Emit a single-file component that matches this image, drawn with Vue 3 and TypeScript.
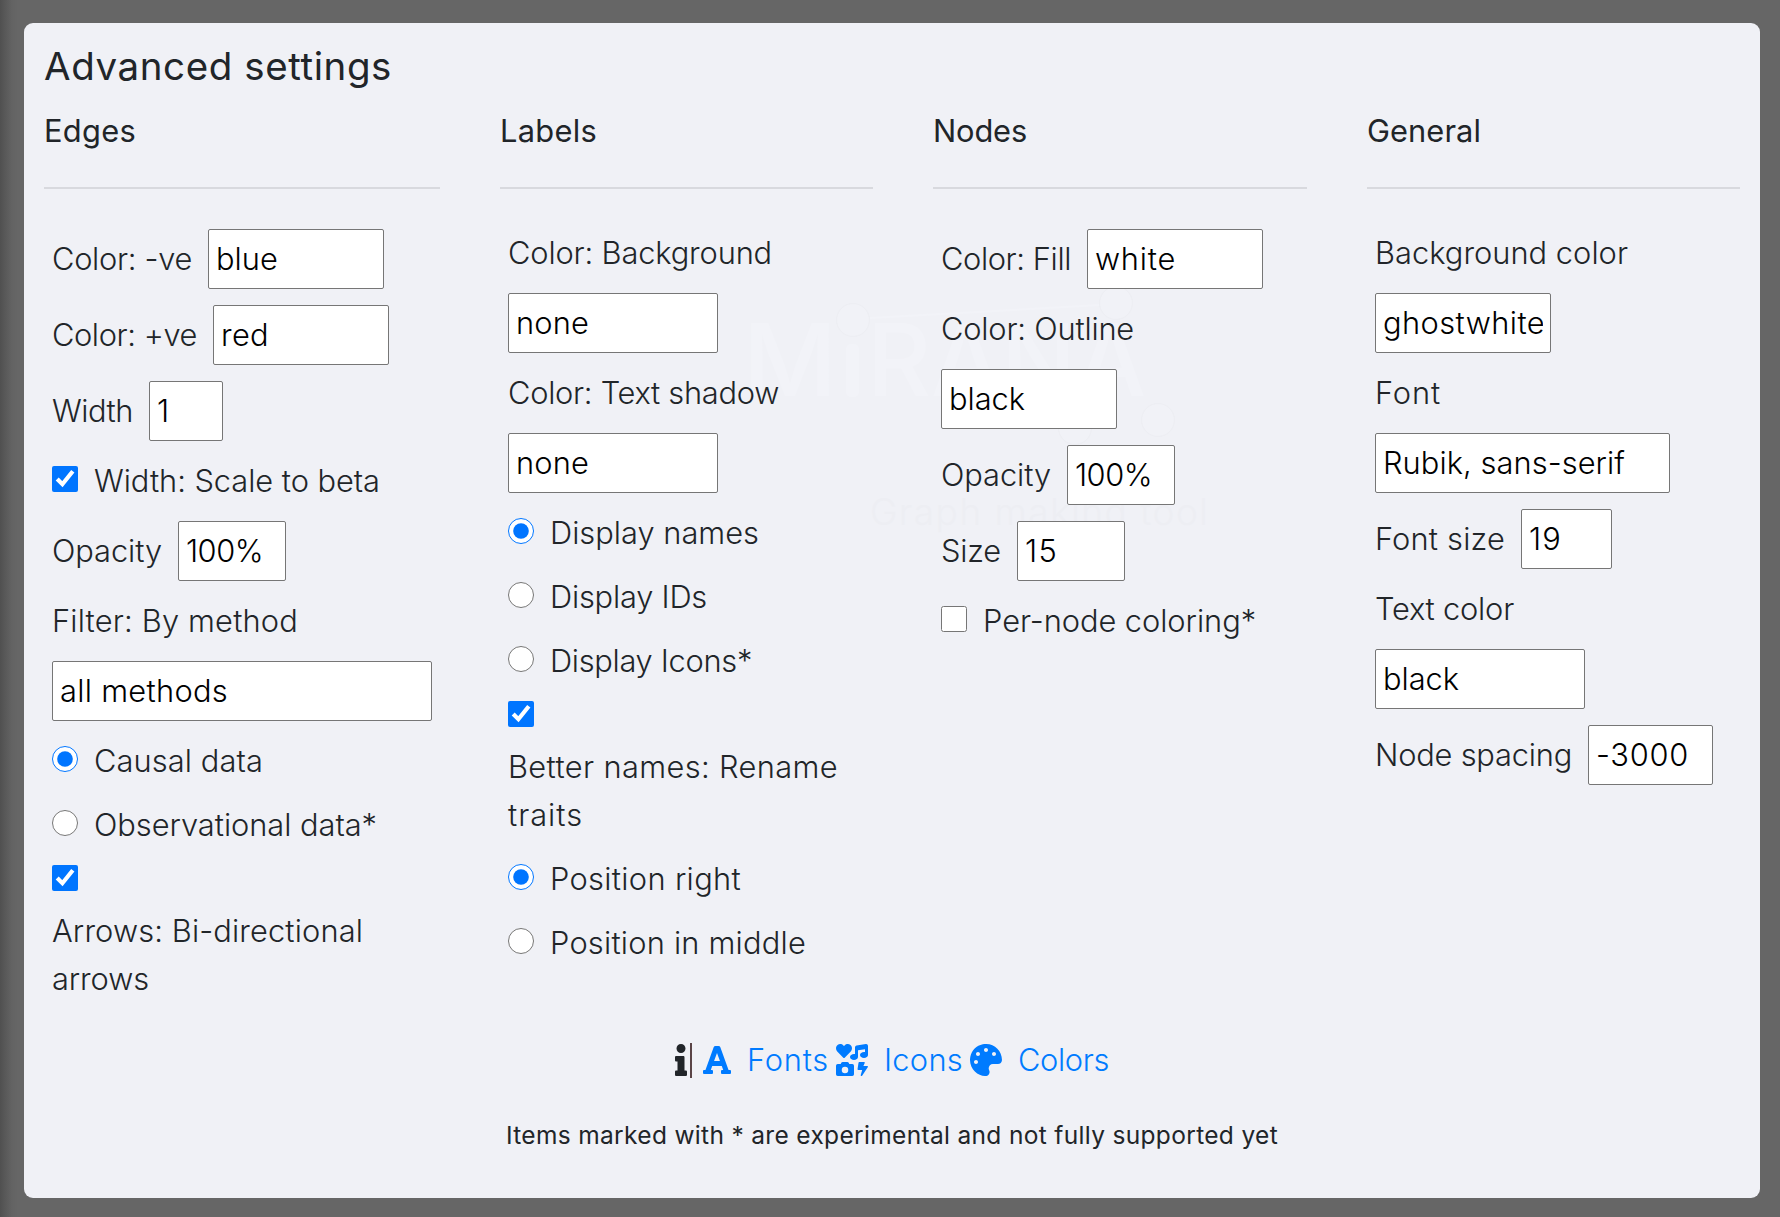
<script setup lang="ts">
type Kind = 'label' | 'field' | 'checkbox' | 'radio' | 'lone'

interface Row {
  kind: Kind
  lines?: [string, number][]
  value?: string
  valueWidth?: number
  boxWidth?: number
  checked?: boolean
}

interface Column {
  title: string
  titleWidth: number
  rows: Row[]
}

const FAMILY = 'Inter, Roboto, "Liberation Sans", sans-serif'
const ctx = document.createElement('canvas').getContext('2d')

function track(text: string, width: number, size = 30.8, weight = 300) {
  if (!ctx) return {}
  ctx.font = `${weight} ${size}px ${FAMILY}`
  const gap = (width - ctx.measureText(text).width) / text.length
  return { letterSpacing: `${gap.toFixed(3)}px` }
}

const label = (text: string, w: number): Row => ({ kind: 'label', lines: [[text, w]] })
const field = (value: string, valueWidth: number, boxWidth: number, text?: string, w = 0): Row => ({
  kind: 'field',
  lines: text ? [[text, w]] : [],
  value,
  valueWidth,
  boxWidth,
})
const choice = (kind: Kind, text: string, w: number, checked = false): Row => ({
  kind,
  lines: [[text, w]],
  checked,
})

const columns: Column[] = [
  {
    title: 'Edges',
    titleWidth: 92,
    rows: [
      field('blue', 62, 176, 'Color: -ve', 140),
      field('red', 48, 176, 'Color: +ve', 145),
      field('1', 17, 74, 'Width', 81),
      choice('checkbox', 'Width: Scale to beta', 286, true),
      field('100%', 77, 108, 'Opacity', 110),
      label('Filter: By method', 246),
      field('all methods', 168, 380),
      choice('radio', 'Causal data', 169, true),
      choice('radio', 'Observational data*', 283),
      { kind: 'lone', checked: true },
      { kind: 'label', lines: [['Arrows: Bi-directional', 311], ['arrows', 97]] },
    ],
  },
  {
    title: 'Labels',
    titleWidth: 97,
    rows: [
      label('Color: Background', 264),
      field('none', 73, 210),
      label('Color: Text shadow', 271),
      field('none', 73, 210),
      choice('radio', 'Display names', 209, true),
      choice('radio', 'Display IDs', 157),
      choice('radio', 'Display Icons*', 202),
      { kind: 'lone', checked: true },
      { kind: 'label', lines: [['Better names: Rename', 330], ['traits', 75]] },
      choice('radio', 'Position right', 191, true),
      choice('radio', 'Position in middle', 256),
    ],
  },
  {
    title: 'Nodes',
    titleWidth: 94,
    rows: [
      field('white', 81, 176, 'Color: Fill', 130),
      label('Color: Outline', 193),
      field('black', 76, 176),
      field('100%', 77, 108, 'Opacity', 110),
      field('15', 33, 108, 'Size', 60),
      choice('checkbox', 'Per-node coloring*', 273),
    ],
  },
  {
    title: 'General',
    titleWidth: 114,
    rows: [
      label('Background color', 253),
      field('ghostwhite', 162, 176),
      label('Font', 66),
      field('Rubik, sans-serif', 242, 295),
      field('19', 33, 91, 'Font size', 130),
      label('Text color', 139),
      field('black', 76, 210),
      field('-3000', 93, 125, 'Node spacing', 197),
    ],
  },
]
</script>

<template>
  <div class="backdrop">
    <main class="panel">
      <svg class="watermark" viewBox="0 0 490 260" width="490" height="260" aria-hidden="true">
        <g fill="#f2f3f8">
          <text x="23" y="116" font-size="100" font-weight="500" textLength="94" lengthAdjust="spacingAndGlyphs">M</text>
          <rect x="126" y="64" width="13" height="53" rx="5" />
          <text x="147" y="116" font-size="100" font-weight="500" textLength="279" lengthAdjust="spacingAndGlyphs">RANA</text>
        </g>
        <path d="M150 38 L380 25" stroke="#f2f3f8" stroke-width="2" />
        <g fill="#f1f2f7" stroke="#edeef3">
          <circle cx="133" cy="40" r="16.5" />
          <circle cx="396" cy="23" r="16.5" />
          <circle cx="355" cy="148" r="16.5" />
          <circle cx="438" cy="140" r="16.5" />
        </g>
        <text x="150" y="245" font-size="37" fill="#edeef3" textLength="338">Graph making tool</text>
      </svg>

      <h1 :style="track('Advanced settings', 348, 38.5, 400)">Advanced settings</h1>

      <div class="columns">
        <section v-for="col in columns" :key="col.title" class="column">
          <h2 :style="track(col.title, col.titleWidth, 30.8, 400)">{{ col.title }}</h2>
          <hr />
          <div class="rows">
            <div v-for="(row, i) in col.rows" :key="i" class="row" :class="row.kind">
              <input
                v-if="row.kind === 'checkbox' || row.kind === 'lone'"
                class="tick"
                type="checkbox"
                :checked="row.checked"
              />
              <input
                v-if="row.kind === 'radio'"
                class="tick"
                type="radio"
                :checked="row.checked"
              />
              <label v-if="row.lines && row.lines.length">
                <span v-for="[text, w] in row.lines" :key="text" :style="track(text, w)">{{ text }}</span>
              </label>
              <input
                v-if="row.kind === 'field'"
                class="entry"
                type="text"
                :value="row.value"
                :style="{ width: row.boxWidth + 'px', ...track(row.value!, row.valueWidth!) }"
              />
            </div>
          </div>
        </section>
      </div>

      <nav class="links">
        <svg class="info" viewBox="0 0 192 512" width="12" height="32">
          <path d="M20 424.229h20V279.771H20c-11.046 0-20-8.954-20-20V212c0-11.046 8.954-20 20-20h112c11.046 0 20 8.954 20 20v212.229h20c11.046 0 20 8.954 20 20V492c0 11.046-8.954 20-20 20H20c-11.046 0-20-8.954-20-20v-47.771c0-11.046 8.954-20 20-20zM96 0C56.235 0 24 32.235 24 72s32.235 72 72 72 72-32.235 72-72S135.764 0 96 0z" />
        </svg>
        <i class="bar"></i>
        <a class="fonts">
          <svg viewBox="0 0 448 512" width="28" height="32">
            <path d="M432 416h-23.41L277.53 53.69A32 32 0 0 0 247.58 32h-47.16a32 32 0 0 0-29.95 21.69L39.41 416H16a16 16 0 0 0-16 16v32a16 16 0 0 0 16 16h128a16 16 0 0 0 16-16v-32a16 16 0 0 0-16-16h-19.58l23.3-64h152.56l23.3 64H304a16 16 0 0 0-16 16v32a16 16 0 0 0 16 16h128a16 16 0 0 0 16-16v-32a16 16 0 0 0-16-16zM176.85 272L224 142.51 271.15 272z" />
          </svg>
          <span :style="track('Fonts', 82)">Fonts</span>
        </a>
        <a class="icons">
          <svg viewBox="0 0 512 512" width="32" height="32">
            <path d="M116.65 219.35a15.68 15.68 0 0 0 22.65 0l96.75-99.83c28.15-29 26.5-77.1-4.91-103.88C203.75-7.7 163-3.5 137.86 22.44L128 32.58l-9.85-10.14C93.05-3.5 52.25-7.7 24.86 15.64c-31.41 26.78-33 74.85-5 103.88zm143.92 100.49h-48l-7.08-14.24a27.39 27.39 0 0 0-25.66-17.78h-71.71a27.39 27.39 0 0 0-25.66 17.78l-7 14.24h-48A27.45 27.45 0 0 0 0 347.3v137.25A27.44 27.44 0 0 0 27.43 512h233.14A27.45 27.45 0 0 0 288 484.55V347.3a27.45 27.45 0 0 0-27.43-27.46zM144 468a52 52 0 1 1 52-52 52 52 0 0 1-52 52zm355.4-115.9h-60.58l22.36-50.75c2.1-6.65-3.93-13.21-12.18-13.21h-75.59c-6.3 0-11.66 3.9-12.5 9.1l-16.8 106.93c-1 6.3 4.88 11.89 12.5 11.89h62.31l-24.2 83c-1.89 6.65 4.2 12.9 12.23 12.9a13.26 13.26 0 0 0 10.92-5.25l92.4-138.91c4.88-6.91-1.16-15.7-10.87-15.7zM478.08.33L329.51 23.17C314.87 25.42 304 38.92 304 54.83V161.6a83.25 83.25 0 0 0-16-1.7c-35.35 0-64 21.48-64 48s28.65 48 64 48c35.2 0 63.73-21.32 64-47.66V99.66l112-17.22v47.18a83.25 83.25 0 0 0-16-1.7c-35.35 0-64 21.48-64 48s28.65 48 64 48c35.2 0 63.73-21.32 64-47.66V32c0-19.48-16-34.42-33.92-31.67z" />
          </svg>
          <span :style="track('Icons', 79)">Icons</span>
        </a>
        <a class="colors">
          <svg viewBox="0 0 512 512" width="32" height="32">
            <path d="M204.3 5C104.9 24.4 24.8 104.3 5.2 203.4c-37 187 131.7 326.4 258.8 306.7 41.2-6.4 61.4-54.6 42.5-91.7-23.1-45.4 9.9-98.4 60.9-98.4h79.7c35.8 0 64.8-29.6 64.9-65.3C511.5 97.1 368.1-26.9 204.3 5zM96 320c-17.7 0-32-14.3-32-32s14.3-32 32-32 32 14.3 32 32-14.3 32-32 32zm32-128c-17.7 0-32-14.3-32-32s14.3-32 32-32 32 14.3 32 32-14.3 32-32 32zm128-64c-17.7 0-32-14.3-32-32s14.3-32 32-32 32 14.3 32 32-14.3 32-32 32zm128 64c-17.7 0-32-14.3-32-32s14.3-32 32-32 32 14.3 32 32-14.3 32-32 32z" />
          </svg>
          <span :style="track('Colors', 91)">Colors</span>
        </a>
      </nav>

      <p class="note" :style="track('Items marked with * are experimental and not fully supported yet', 772, 24.5, 400)">Items marked with * are experimental and not fully supported yet</p>
    </main>
  </div>
</template>

<style>
body {
  background: #666;
}
</style>

<style scoped>
* {
  box-sizing: border-box;
}

.backdrop {
  height: 1217px;
  padding: 23px 20px 19px 24px;
  background: linear-gradient(90deg, #505050 0, #5a5a5a 6px, #636363 12px, #666 18px);
  font: 300 30.8px/48px Inter, Roboto, 'Liberation Sans', sans-serif;
  color: #212529;
  overflow: hidden;
}

.panel {
  position: relative;
  height: 1175px;
  padding: 20px 20px 0;
  border-radius: 9px;
  background: #f0f1f6;
}

.watermark {
  position: absolute;
  left: 696px;
  top: 257px;
  overflow: visible;
}

h1,
h2 {
  position: relative;
  margin: 0;
  font-weight: 400;
  white-space: nowrap;
}

h1 {
  height: 48px;
  font-size: 38.5px;
  line-height: 46px;
}

h2 {
  height: 38px;
  font-size: 30.8px;
  line-height: 37px;
}

.columns {
  position: relative;
  display: grid;
  grid-template-columns: 396px 373px 374px 373px;
  column-gap: 60px;
  height: 945px;
  padding-top: 21px;
}

hr {
  height: 2px;
  margin: 37px 0 32px;
  border: 0;
  background: #d8d9de;
}

.rows {
  padding-left: 8px;
}

.row {
  display: flex;
  align-items: center;
  gap: 16px;
  padding: 8px 0;
}

label span {
  display: block;
  white-space: nowrap;
}

.tick {
  flex: none;
  width: 26px;
  height: 26px;
  margin: 0;
}

.checkbox .tick,
.radio .tick {
  margin-bottom: 4px;
}

.entry {
  height: 60px;
  margin: 0;
  padding: 0 7px 2px;
  border: 1px solid #767676;
  border-radius: 2px;
  background: #fff;
  color: #000;
  font: inherit;
  outline: none;
}

.links {
  position: relative;
  display: flex;
  align-items: center;
  height: 48px;
  padding-left: 631px;
}

.links svg {
  display: block;
  flex: none;
  fill: currentColor;
}

.links a {
  display: flex;
  align-items: center;
  color: #007bff;
  white-space: nowrap;
}

.bar {
  width: 2px;
  height: 35px;
  margin: 0 11px 0 3px;
  background: #5a4446;
}

.fonts {
  width: 133px;
  gap: 16px;
}

.icons {
  width: 134px;
  gap: 16px;
}

.colors {
  gap: 16px;
}

.note {
  position: relative;
  margin: 27px 0 0 462px;
  font-size: 24.5px;
  font-weight: 400;
  white-space: nowrap;
}
</style>
